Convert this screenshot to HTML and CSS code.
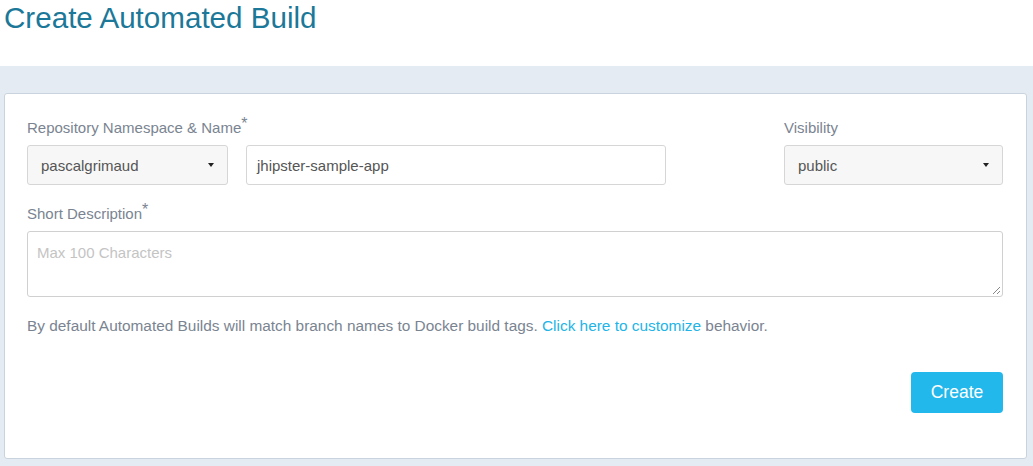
FILE: index.html
```html
<!DOCTYPE html>
<html>
<head>
<meta charset="utf-8">
<link rel="stylesheet" href="styles.css">
</head>
<body>
<header class="top">
  <h1 class="title">Create Automated Build</h1>
</header>
<main class="page">
  <section class="card">
    <div class="row">
      <div class="field-group">
        <div class="label">Repository Namespace &amp; Name<sup>*</sup></div>
        <div class="inline">
          <div class="select ns"><span>pascalgrimaud</span><span class="caret"></span></div>
          <div class="input name">jhipster-sample-app</div>
        </div>
      </div>
      <div class="field-group vis">
        <div class="label">Visibility</div>
        <div class="select visibility"><span>public</span><span class="caret"></span></div>
      </div>
    </div>
    <div class="label desc-label">Short Description<sup>*</sup></div>
    <div class="textarea"><span class="placeholder">Max 100 Characters</span>
      <svg class="grip" width="9" height="9" viewBox="0 0 9 9"><path d="M8 1 L1 8 M8 5 L5 8" stroke="#888" stroke-width="1" fill="none"/></svg>
    </div>
    <p class="help">By default Automated Builds will match branch names to Docker build tags. <a href="#" class="link">Click here to customize</a> behavior.</p>
    <div class="actions"><button class="btn">Create</button></div>
  </section>
</main>
</body>
</html>
```
FILE: styles.css
```css
* { box-sizing: border-box; }
html, body { margin: 0; padding: 0; }
body {
  font-family: "Liberation Sans", Arial, sans-serif;
  background: #e5ebf3;
  width: 1033px;
  height: 466px;
  overflow: hidden;
}
.top {
  background: #fff;
  height: 66px;
}
.title {
  margin: 0;
  padding: 1px 0 0 4px;
  font-weight: normal;
  font-size: 29.6px;
  line-height: 34px;
  color: #1b7898;
}
.page {
  padding: 27px 6px 7px 4px;
}
.card {
  background: #fff;
  border: 1px solid #c9d3de;
  border-radius: 3px;
  height: 366px;
  padding: 20px 23px 0 22px;
}
.row {
  display: flex;
  justify-content: space-between;
}
.label {
  font-size: 15px;
  line-height: 28px;
  color: #7a8491;
  margin-bottom: 3px;
}
.label sup {
  font-size: 16px;
  line-height: 0;
  position: relative;
  top: 2px;
}
.inline {
  display: flex;
  gap: 18px;
}
.select, .input {
  height: 40px;
  border: 1px solid #d6d6d6;
  border-radius: 3px;
  font-size: 15px;
  color: #555;
  display: flex;
  align-items: center;
  padding: 0 13px;
}
.select {
  background: #f7f7f7;
  justify-content: space-between;
}
.ns { width: 201px; }
.name { width: 420px; background: #fff; padding-left: 10px; }
.visibility { width: 219px; }
.caret {
  width: 0;
  height: 0;
  border-left: 3px solid transparent;
  border-right: 3px solid transparent;
  border-top: 4px solid #222;
}
.desc-label {
  margin-top: 15px;
  margin-bottom: 3px;
}
.textarea {
  height: 66px;
  border: 1px solid #d0d0d0;
  border-radius: 3px;
  padding: 12px 9px;
  position: relative;
  font-size: 15px;
}
.placeholder { color: #c4c4c4; }
.grip {
  position: absolute;
  right: 1px;
  bottom: 1px;
}
.help {
  margin: 19px 0 0;
  font-size: 15.4px;
  line-height: 20px;
  color: #7a8491;
}
.link {
  color: #22b4e6;
  text-decoration: none;
}
.actions {
  display: flex;
  justify-content: flex-end;
  margin-top: 36px;
}
.btn {
  font-family: "Liberation Sans", Arial, sans-serif;
  background: #22b8eb;
  border: none;
  border-radius: 4px;
  color: #fff;
  font-size: 17.5px;
  width: 92px;
  height: 41px;
}
```
